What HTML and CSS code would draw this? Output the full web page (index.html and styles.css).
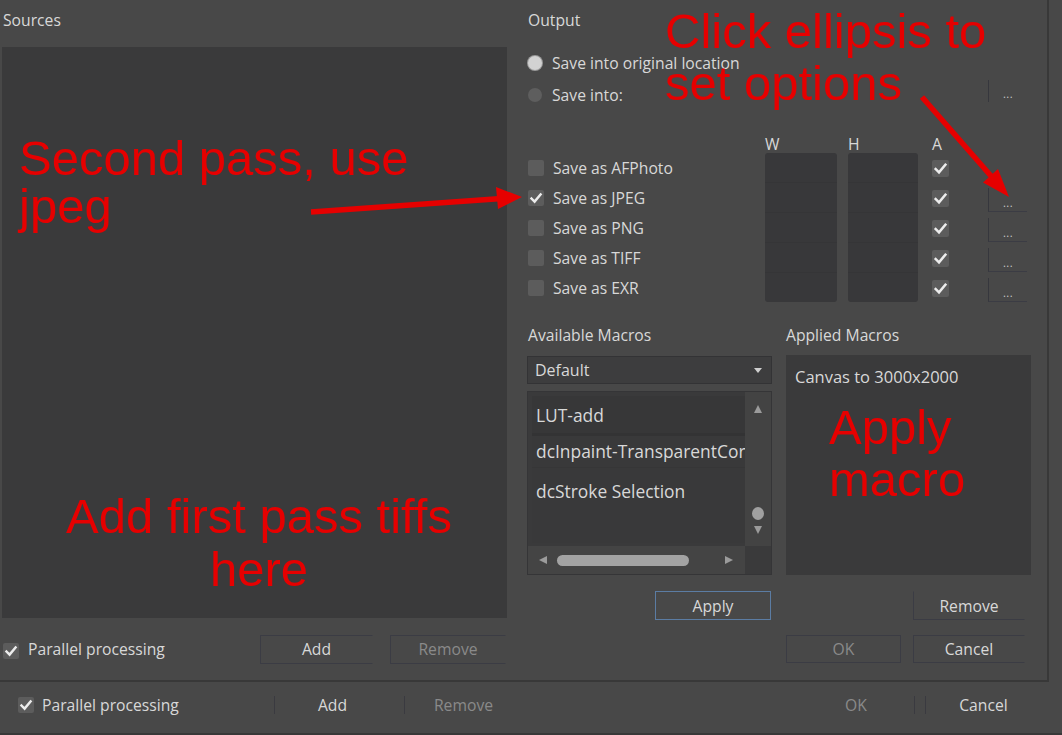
FILE: index.html
```html
<!DOCTYPE html>
<html>
<head>
<meta charset="utf-8">
<title>Batch Job</title>
<link rel="stylesheet" href="styles.css">
</head>
<body>
<div class="window">
  <section class="sources">
    <div class="title">Sources</div>
    <div class="source-panel"></div>
    <div class="left-footer">
      <span class="cb"><svg viewBox="0 0 16 16"><path d="M3.5 8.5 L6.6 11.6 L12.6 4.4"/></svg></span>
      <span class="cb-text">Parallel processing</span>
      <button class="btn btn-add">Add</button>
      <button class="btn btn-remove disabled">Remove</button>
    </div>
  </section>

  <section class="output">
    <div class="title">Output</div>
    <div class="radios">
      <div class="radio-row"><span class="radio on"></span><span>Save into original location</span></div>
      <div class="radio-row"><span class="radio"></span><span>Save into:</span><span class="ell ell-top">...</span></div>
    </div>

    <div class="formats">
      <div class="fh fh-w">W</div>
      <div class="fh fh-h">H</div>
      <div class="fh fh-a">A</div>

      <div class="fmt r1"><span class="cb off"></span>Save as AFPhoto</div>
      <div class="fmt r2"><span class="cb"><svg viewBox="0 0 16 16"><path d="M3.5 8.5 L6.6 11.6 L12.6 4.4"/></svg></span>Save as JPEG</div>
      <div class="fmt r3"><span class="cb off"></span>Save as PNG</div>
      <div class="fmt r4"><span class="cb off"></span>Save as TIFF</div>
      <div class="fmt r5"><span class="cb off"></span>Save as EXR</div>

      <div class="dimbox wbox"><i></i><i></i><i></i><i></i><i></i></div>
      <div class="dimbox hbox"><i></i><i></i><i></i><i></i><i></i></div>

      <div class="acell r1"><span class="cb big"><svg viewBox="0 0 16 16"><path d="M3.5 8.5 L6.6 11.6 L12.6 4.4"/></svg></span></div>
      <div class="acell r2"><span class="cb big"><svg viewBox="0 0 16 16"><path d="M3.5 8.5 L6.6 11.6 L12.6 4.4"/></svg></span></div>
      <div class="acell r3"><span class="cb big"><svg viewBox="0 0 16 16"><path d="M3.5 8.5 L6.6 11.6 L12.6 4.4"/></svg></span></div>
      <div class="acell r4"><span class="cb big"><svg viewBox="0 0 16 16"><path d="M3.5 8.5 L6.6 11.6 L12.6 4.4"/></svg></span></div>
      <div class="acell r5"><span class="cb big"><svg viewBox="0 0 16 16"><path d="M3.5 8.5 L6.6 11.6 L12.6 4.4"/></svg></span></div>

      <div class="ell r2">...</div>
      <div class="ell r3">...</div>
      <div class="ell r4">...</div>
      <div class="ell r5">...</div>
    </div>

    <div class="macro-head">
      <span>Available Macros</span>
      <span>Applied Macros</span>
    </div>

    <div class="macro-body">
      <div class="avail">
        <div class="dropdown"><span>Default</span><svg class="dd-arrow" viewBox="0 0 8 5"><path d="M0 0 H8 L4 5 Z"/></svg></div>
        <div class="list">
          <div class="items">
            <div class="item i1">LUT-add</div>
            <div class="item i2">dcInpaint-TransparentCorners</div>
            <div class="item i3">dcStroke Selection</div>
          </div>
          <div class="vscroll">
            <svg class="arr" viewBox="0 0 8 8"><path d="M4 0 L8 8 H0 Z"/></svg>
            <span class="vthumb"></span>
            <svg class="arr" viewBox="0 0 8 8"><path d="M0 0 H8 L4 8 Z"/></svg>
          </div>
          <div class="hscroll">
            <svg class="arr" viewBox="0 0 8 8"><path d="M0 4 L8 0 V8 Z"/></svg>
            <span class="hthumb"></span>
            <svg class="arr" viewBox="0 0 8 8"><path d="M8 4 L0 0 V8 Z"/></svg>
          </div>
          <div class="corner"></div>
        </div>
      </div>
      <div class="applied">Canvas to 3000x2000</div>
    </div>

    <div class="apply-row">
      <button class="btn btn-apply">Apply</button>
      <button class="btn btn-remove2">Remove</button>
    </div>
    <div class="ok-row">
      <button class="btn btn-ok disabled">OK</button>
      <button class="btn btn-cancel">Cancel</button>
    </div>
  </section>
</div>

<div class="bottombar">
  <div class="bb-check">
    <span class="cb"><svg viewBox="0 0 16 16"><path d="M3.5 8.5 L6.6 11.6 L12.6 4.4"/></svg></span>
    <span class="cb-text">Parallel processing</span>
  </div>
  <span class="bb-btn bb-add">Add</span>
  <span class="bb-btn bb-remove disabled">Remove</span>
  <span class="bb-btn bb-ok disabled">OK</span>
  <span class="bb-btn bb-cancel">Cancel</span>
</div>

<div class="anno anno-click">Click ellipsis to<br>set options</div>
<div class="anno anno-second">Second pass, use<br>jpeg</div>
<div class="anno anno-add">Add first pass tiffs<br>here</div>
<div class="anno anno-apply">Apply<br>macro</div>

<svg class="arrows" viewBox="0 0 1062 735">
  <line x1="311" y1="212" x2="502" y2="198.5"/>
  <polygon points="522,197 496,187 498,209"/>
  <line x1="922" y1="97" x2="991" y2="176"/>
  <polygon points="1009,197 998,169 983,182.5"/>
</svg>
</body>
</html>
```

FILE: styles.css
```css
* { box-sizing: border-box; }

body {
  margin: 0;
  width: 1062px;
  height: 735px;
  overflow: hidden;
  position: relative;
  background: #484848;
  color: #d8d8d8;
  font-family: "Open Sans", "Noto Sans", sans-serif;
  font-size: 15.7px;
}

button {
  font-family: inherit;
  font-size: inherit;
  color: inherit;
  background: transparent;
  padding: 0;
  margin: 0;
  cursor: default;
}

.disabled { color: #8a8a8a; }

/* main window */
.window {
  display: flex;
  width: 1049px;
  height: 682px;
  border-right: 2px solid #383838;
  border-bottom: 2px solid #383838;
}

.title {
  height: 40px;
  line-height: 40px;
  padding-left: 1px;
}

.sources {
  width: 507px;
  padding-left: 2px;
  display: flex;
  flex-direction: column;
}
.sources > *, .output > * { flex: none; }

.source-panel {
  height: 571px;
  margin-top: 7px;
  background: #3a3a3b;
}

.left-footer {
  height: 62px;
  display: flex;
  align-items: center;
  padding-left: 1px;
}
.left-footer .cb { margin-top: 3px; }
.cb-text { margin-left: 9px; }

/* checkbox */
.cb {
  width: 16px;
  height: 16px;
  border-radius: 2px;
  background: #5c5c5c;
  display: inline-flex;
  flex: none;
}
.cb svg { width: 16px; height: 16px; }
.cb path {
  fill: none;
  stroke: #ececec;
  stroke-width: 2.4;
  stroke-linecap: square;
}
.cb.big { width: 17px; height: 17px; }
.cb.big svg { width: 17px; height: 17px; }

/* buttons */
.btn {
  height: 29px;
  border: 1px solid transparent;
  border-top-color: #3b3c44;
  border-bottom-color: #3b3c44;
  border-left-color: #3b3c44;
  text-align: center;
  line-height: 26px;
}
.btn-add { margin-left: auto; width: 113px; }
.btn-remove { margin-left: 17px; margin-right: 1px; width: 116px; }

/* output */
.output {
  margin-left: 20px;
  width: 504px;
  display: flex;
  flex-direction: column;
}

.radios { margin-top: 7px; }

.radio-row {
  height: 32px;
  display: flex;
  align-items: center;
}
.radio {
  width: 14px;
  height: 14px;
  border-radius: 50%;
  background: #5e5e5e;
  margin-left: 1px;
  margin-right: 10px;
}
.radio.on {
  background: #d2d2d2;
  box-shadow: 0 0 0 1px #9a9a9a;
}

.ell {
  width: 39px;
  height: 24px;
  border-left: 1px solid #36373d;
  border-bottom: 1px solid #3b3c44;
  color: #c8c8c8;
  font-size: 11px;
  letter-spacing: 0.5px;
  display: flex;
  align-items: center;
  justify-content: center;
  padding-top: 5px;
}
.ell-top {
  margin-left: auto;
  margin-right: 4px;
  align-self: flex-start;
  margin-top: 1px;
  height: 22px;
  border-bottom: none;
}

/* formats grid */
.formats {
  display: grid;
  grid-template-columns: 238px 72px 11px 70px 14px 56px 39px;
  grid-template-rows: 42px repeat(5, 30px);
}
.fh {
  grid-row: 1;
  align-self: end;
  line-height: 20px;
  margin-bottom: -1px;
}
.fh-w { grid-column: 2; }
.fh-h { grid-column: 4; }
.fh-a { grid-column: 6; }

.r1 { grid-row: 2; }
.r2 { grid-row: 3; }
.r3 { grid-row: 4; }
.r4 { grid-row: 5; }
.r5 { grid-row: 6; }

.fmt {
  grid-column: 1;
  display: flex;
  align-items: center;
  padding-left: 1px;
  gap: 9px;
}

.dimbox {
  grid-row: 2 / 7;
  display: flex;
  flex-direction: column;
  background: #38383a;
  border-radius: 3px;
  margin-bottom: 1px;
}
.dimbox i {
  flex: 1;
  border-bottom: 1px solid #353537;
}
.dimbox i:last-child { border-bottom: none; }
.wbox { grid-column: 2; }
.hbox { grid-column: 4; }

.acell {
  grid-column: 6;
  display: flex;
  align-items: center;
}

.formats .ell {
  grid-column: 7;
  align-self: end;
  margin-bottom: 1px;
}

/* macros */
.macro-head {
  height: 52px;
  display: grid;
  grid-template-columns: 245px 245px;
  column-gap: 14px;
  align-items: end;
  padding-bottom: 10px;
  line-height: 20px;
}
.macro-head span:first-child { padding-left: 1px; }

.macro-body {
  height: 220px;
  display: grid;
  grid-template-columns: 245px 245px;
  column-gap: 14px;
}

.avail { display: flex; flex-direction: column; }
.avail > * { flex: none; }

.dropdown {
  height: 28px;
  margin-top: 1px;
  background: #3d3d3e;
  border: 1px solid #333335;
  display: flex;
  align-items: center;
  padding-left: 7px;
  padding-right: 9px;
  font-size: 16px;
}
.dd-arrow {
  margin-left: auto;
  width: 8px;
  height: 5px;
  fill: #cfcfcf;
}

.list {
  margin-top: 7px;
  height: 184px;
  background: #3a3a3b;
  border: 1px solid #353537;
  display: grid;
  grid-template-columns: 1fr 26px;
  grid-template-rows: 1fr 28px;
  overflow: hidden;
}

.items {
  padding: 4px 0 0 4px;
  overflow: hidden;
  font-size: 17.4px;
}
.item {
  white-space: nowrap;
  overflow: hidden;
  padding-left: 4px;
  background: #39393a;
}
.i1 {
  height: 40px;
  line-height: 38px;
  background: #373738;
  border-bottom: 3px solid #333334;
}
.i2 {
  height: 32px;
  line-height: 31px;
  border-bottom: 1px solid #363637;
}
.i3 {
  height: 75px;
  padding-top: 10px;
  line-height: 26px;
}

.vscroll {
  background: #434343;
  display: flex;
  flex-direction: column;
  align-items: center;
  padding-top: 13px;
}
.arr { width: 8px; height: 8px; fill: #9b9b9b; flex: none; }
.vthumb {
  width: 12px;
  height: 13px;
  border-radius: 50%;
  background: #a0a0a0;
  margin-top: 94px;
  flex: none;
}
.vscroll .arr:last-child { margin-top: 6px; }

.hscroll {
  background: #444444;
  display: flex;
  align-items: center;
  padding-left: 11px;
}
.hthumb {
  width: 132px;
  height: 11px;
  border-radius: 6px;
  background: #a3a3a3;
  margin-left: 10px;
  flex: none;
}
.hscroll .arr:last-child { margin-left: 36px; }

.corner { background: #3a3a3b; }

.applied {
  background: #3a3a3b;
  padding: 10px 0 0 9px;
  line-height: 24px;
  font-size: 16.5px;
}

.apply-row, .ok-row {
  display: grid;
  grid-template-columns: 245px 245px;
  column-gap: 14px;
}
.apply-row { margin-top: 16px; }
.ok-row { margin-top: 15px; }

.btn-apply {
  grid-column: 1;
  justify-self: end;
  width: 116px;
  margin-right: 1px;
  border: 1px solid #5b7ca3;
}
.btn-remove2 {
  grid-column: 2;
  justify-self: end;
  width: 112px;
  margin-right: 6px;
  border-top-color: transparent;
}
.btn-ok {
  grid-column: 2;
  grid-row: 1;
  justify-self: start;
  width: 115px;
  height: 28px;
  border-right-color: #3b3c44;
}
.btn-cancel {
  grid-column: 2;
  grid-row: 1;
  justify-self: end;
  width: 112px;
  height: 28px;
  margin-right: 6px;
}

/* bottom bar */
.bottombar {
  height: 53px;
  padding-bottom: 6px;
  border-bottom: 2px solid #383838;
  display: flex;
  align-items: center;
}
.bb-check {
  width: 274px;
  display: flex;
  align-items: center;
  padding-left: 18px;
  flex: none;
}
.bb-check .cb-text { margin-left: 8px; }
.bb-btn {
  height: 18px;
  line-height: 18px;
  text-align: center;
  flex: none;
}
.bb-add { width: 116px; border-left: 1px solid #3a3a40; }
.bb-remove { width: 118px; margin-left: 14px; border-left: 1px solid #3a3a40; }
.bb-ok { width: 117px; margin-left: 276px; border-right: 1px solid #3a3a40; }
.bb-cancel { width: 116px; margin-left: 10px; border-left: 1px solid #3a3a40; }

/* annotations */
.anno {
  position: absolute;
  font-family: "Liberation Sans", Arial, sans-serif;
  font-size: 49px;
  color: #e60000;
  white-space: nowrap;
}
.anno-click { left: 665px; top: 5px; line-height: 52px; }
.anno-second { left: 19px; top: 134px; line-height: 48px; }
.anno-add { left: 63px; width: 392px; top: 490px; line-height: 53px; text-align: center; }
.anno-apply { left: 829px; top: 401px; line-height: 52px; }

.arrows {
  position: absolute;
  left: 0;
  top: 0;
  width: 1062px;
  height: 735px;
  pointer-events: none;
}
.arrows line { stroke: #e60000; stroke-width: 5.5; }
.arrows polygon { fill: #e60000; }
```
